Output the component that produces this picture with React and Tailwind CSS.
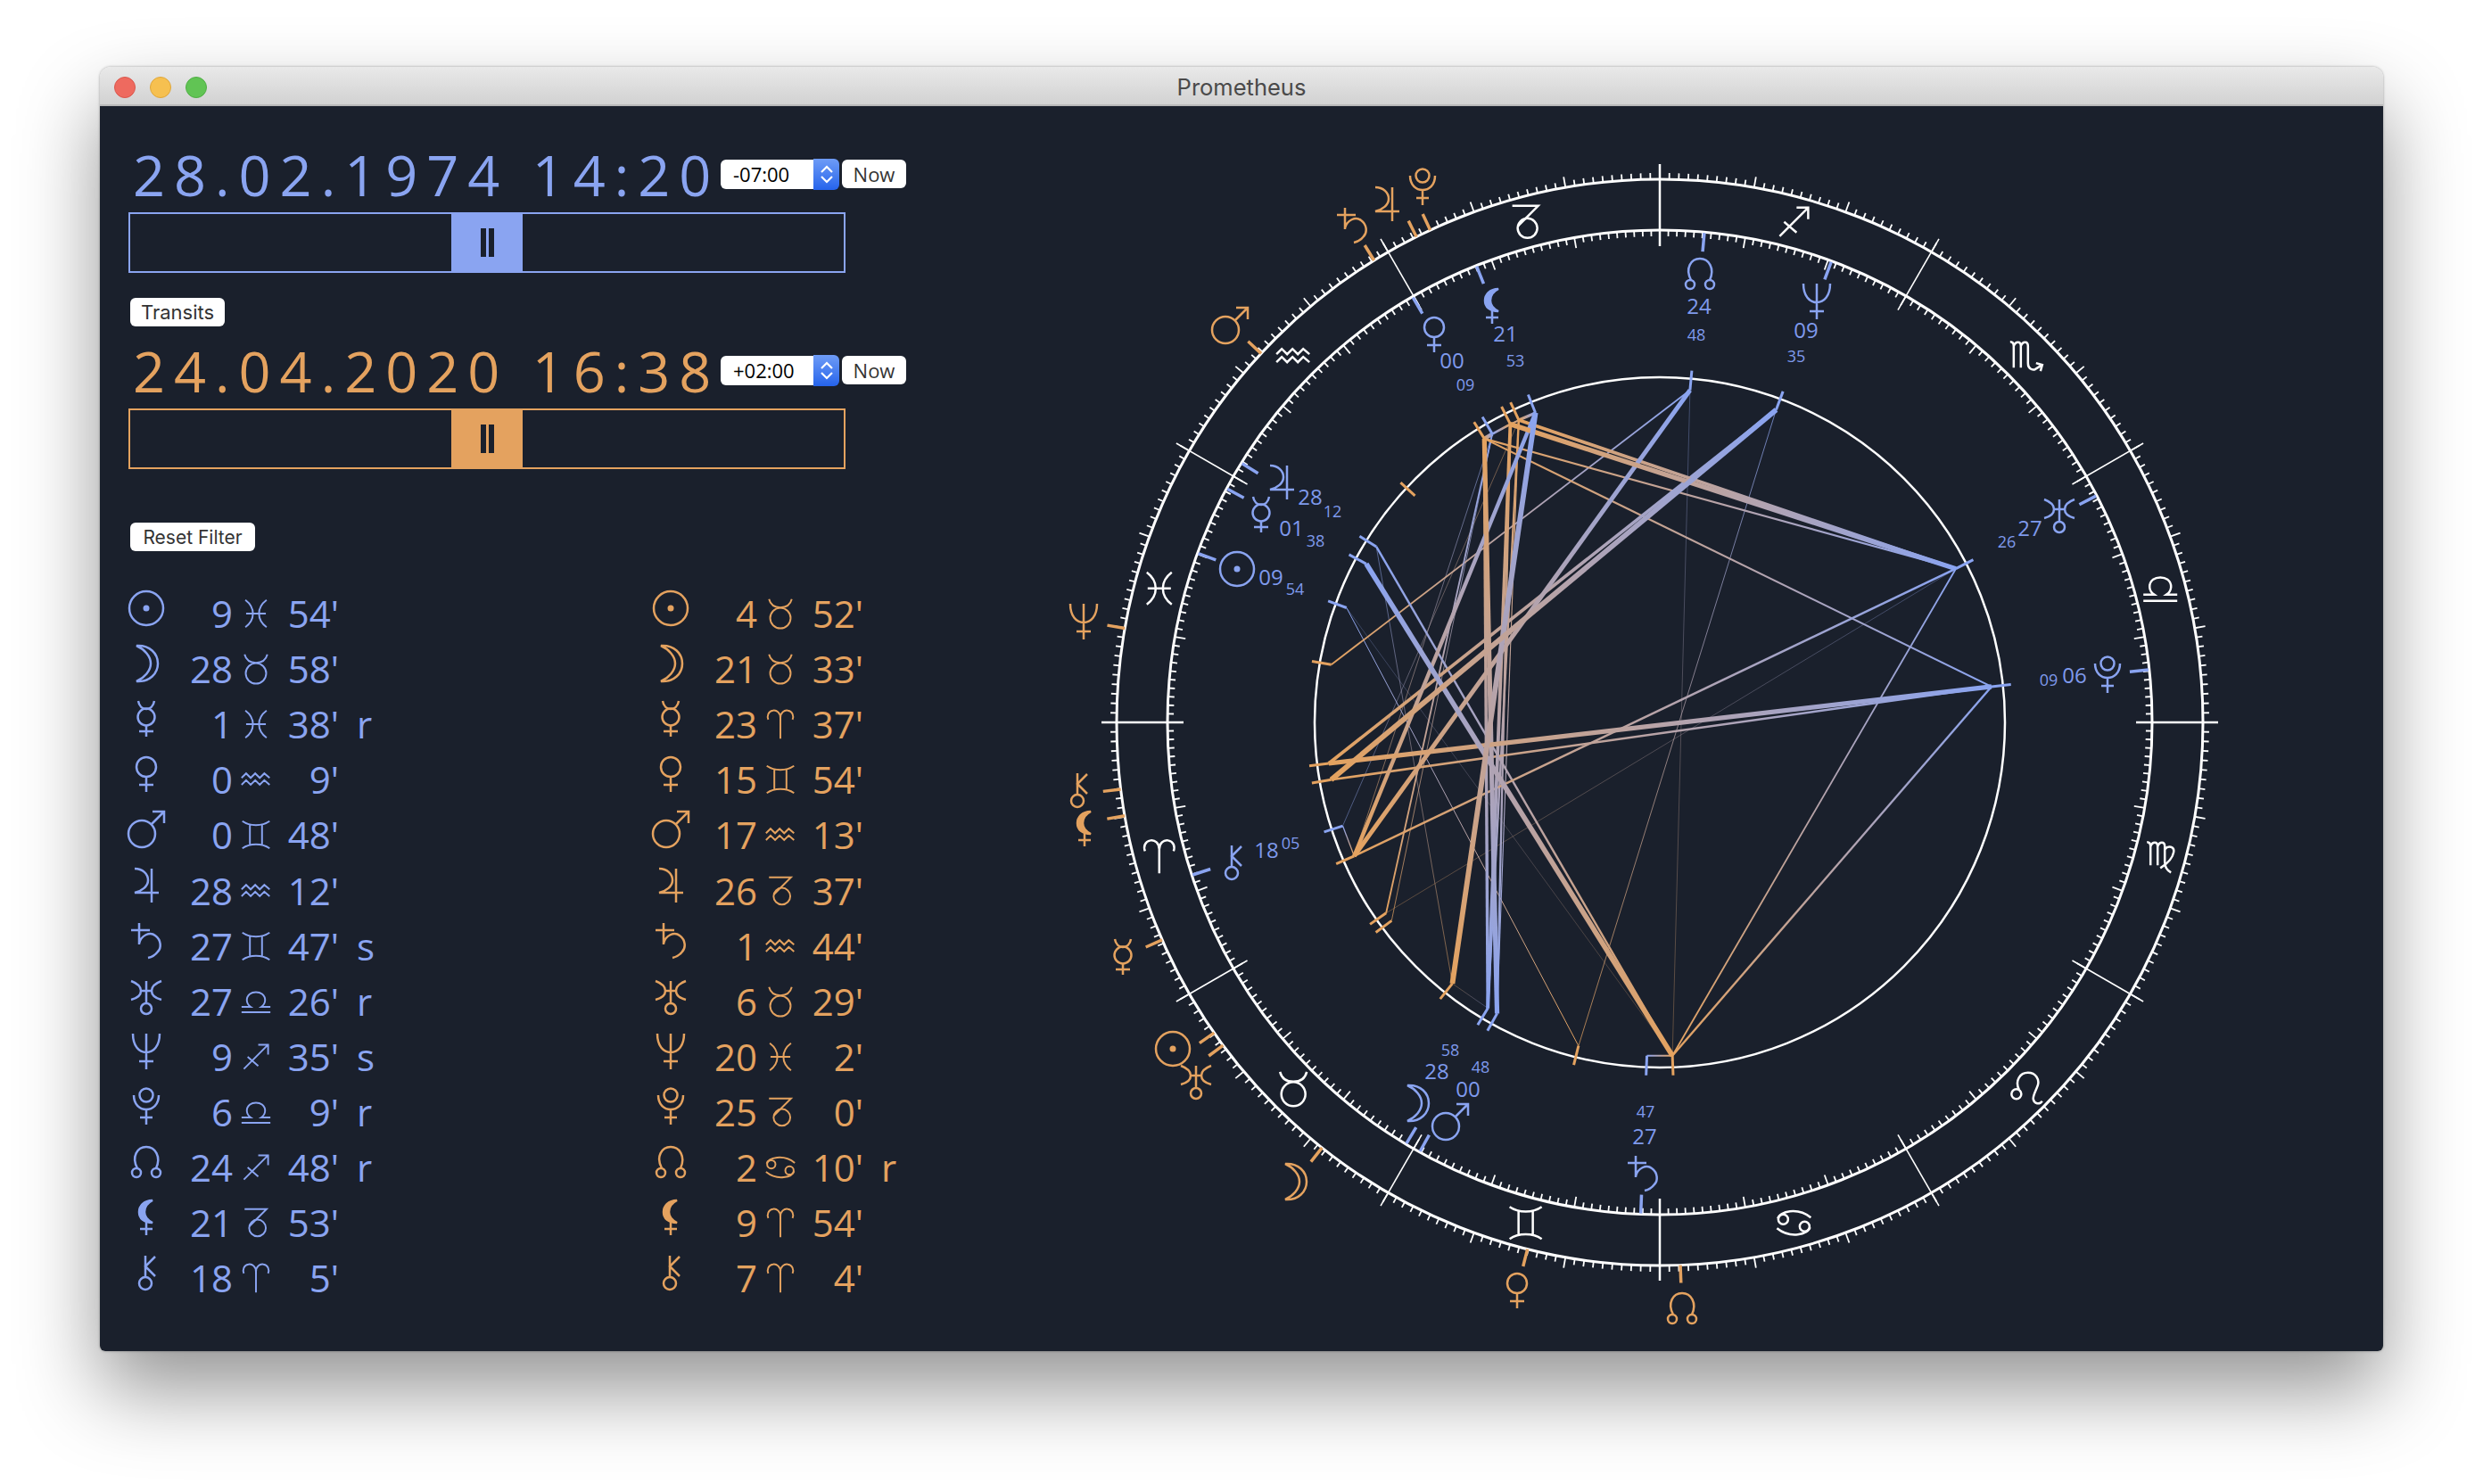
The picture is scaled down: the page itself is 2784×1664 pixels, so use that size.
import React from "react";

const BLUE = "#8aa4f1";
const ORANGE = "#e4a25f";
const CX = 700;
const CY = 691;

// symbols are drawn around 0,0 in a box of about 40x40
const GLYPHS = {
  sun: (
    <>
      <circle r="19" />
      <circle r="3.5" fill="currentColor" stroke="none" />
    </>
  ),
  moon: <path d="M-11 -20 C 4 -21 13 -11 13 0 C 13 11 4 21 -11 20 C -2 16 5 8 5 0 C 5 -8 -2 -16 -11 -20 Z" />,
  mercury: (
    <>
      <path d="M-9 -20 C -8 -14 -4 -11 0 -11 C 4 -11 8 -14 9 -20" />
      <circle cy="-2" r="9.5" />
      <path d="M0 8 V20 M-8 14 H8" />
    </>
  ),
  venus: (
    <>
      <circle cy="-8" r="11" />
      <path d="M0 3 V20 M-8 12 H8" />
    </>
  ),
  mars: (
    <>
      <circle cx="-5" cy="5" r="15" />
      <path d="M6 -6 L20 -20 M7 -20 H20 V-7" />
    </>
  ),
  jupiter: <path d="M-13 -19 C -4 -19 2 -13 2 -6 C 2 1 -5 6 -13 8 H14 M6 -19 V19" />,
  saturn: <path d="M-8 -20 V4 M-17 -12 H4 M-8 3 C -6 -6 4 -11 10 -6 C 17 -1 17 8 13 12 C 10 16 7 18 2 19" />,
  uranus: (
    <>
      <path d="M-17 -17 C -9 -14 -6 -10 -6 -6 C -6 -2 -9 2 -17 4 M17 -17 C 9 -14 6 -10 6 -6 C 6 -2 9 2 17 4 M-6 -6 H6 M0 -17 V8" />
      <circle cy="14" r="6" />
    </>
  ),
  neptune: <path d="M-15 -20 C -15 -6 -8 1 0 1 C 8 1 15 -6 15 -20 M0 -20 V20 M-8 11 H8" />,
  pluto: (
    <>
      <circle cy="-13" r="7.5" />
      <path d="M-14 -13 C -14 -2 -7 3 0 3 C 7 3 14 -2 14 -13 M0 3 V20 M-7 12 H7" />
    </>
  ),
  node: (
    <>
      <path d="M-10 7 C -17 -6 -10 -17 0 -17 C 10 -17 17 -6 11 7" />
      <circle cx="-11" cy="12" r="5" />
      <circle cx="11" cy="12" r="5" />
    </>
  ),
  lilith: (
    <>
      <path d="M7 -19 C -3 -19 -8 -12 -8 -6 C -8 1 -3 6 7 6 C 1 3 -2 -1 -2 -6 C -2 -12 1 -16 7 -19 Z" fill="currentColor" />
      <path d="M0 4 V20 M-7 13 H7" />
    </>
  ),
  chiron: (
    <>
      <circle cx="-1" cy="12" r="7" />
      <path d="M-1 5 V-19 M10 -18 L-1 -7 L10 4" />
    </>
  ),
  aries: <path d="M0 19 V-8 C 0 -15 -5 -19 -10 -18 C -16 -17 -18 -11 -16 -6 M0 -8 C 0 -15 5 -19 10 -18 C 16 -17 18 -11 16 -6" />,
  taurus: (
    <>
      <circle cy="6" r="13.5" />
      <path d="M-15 -19 C -13 -11 -7 -8 0 -8 C 7 -8 13 -11 15 -19" />
    </>
  ),
  gemini: <path d="M-18 -18 C -8 -11 8 -11 18 -18 M-18 18 C -8 11 8 11 18 18 M-8 -14 V14 M8 -14 V14" />,
  cancer: (
    <>
      <circle cx="-12" cy="-4" r="5.5" />
      <circle cx="12" cy="4" r="5.5" />
      <path d="M-18 -5 C -16 -13 4 -18 19 -6 M18 5 C 16 13 -4 18 -19 6" />
    </>
  ),
  leo: (
    <>
      <circle cx="-11" cy="6" r="5.5" />
      <path d="M-8 1 C -13 -9 -7 -18 2 -18 C 11 -18 15 -10 13 -4 C 11 2 7 8 8 12 C 9 17 15 18 18 14" />
    </>
  ),
  virgo: (
    <path d="M-15 -16 C -12 -16 -11 -14 -11 -11 V10 M-11 -11 C -9 -17 -3 -17 -3 -11 V10 M-3 -11 C -1 -17 5 -17 5 -11 V6 C 5 12 8 16 12 18 M5 -8 C 9 -13 16 -11 15 -5 C 14 1 8 8 0 13" />
  ),
  libra: <path d="M-19 14 H19 M-19 7 H-7 C -13 3 -14 -5 -8 -10 C -4 -13 4 -13 8 -10 C 14 -5 13 3 7 7 H19" />,
  scorpio: (
    <path d="M-18 -16 C -15 -16 -14 -14 -14 -11 V13 M-14 -11 C -12 -17 -6 -17 -6 -11 V13 M-6 -11 C -4 -17 2 -17 2 -11 V8 C 2 14 6 16 10 15 L18 10 M11 8 L18 10 L16 17" />
  ),
  sagittarius: <path d="M-16 16 L16 -16 M3 -16 H16 V-3 M-11 0 L3 12" />,
  capricorn: (
    <>
      <path d="M-15 -18 H14 L-9 5" />
      <circle cx="2" cy="7" r="11" />
    </>
  ),
  aquarius: <path d="M-19 -2 L-13 -8 L-7 -2 L-1 -8 L5 -2 L11 -8 L18 -2 M-19 7 L-13 1 L-7 7 L-1 1 L5 7 L11 1 L18 7" />,
  pisces: <path d="M-14 -18 C -6 -12 -4 -6 -4 0 C -4 6 -6 12 -14 18 M14 -18 C 6 -12 4 -6 4 0 C 4 6 6 12 14 18 M-13 0 H13" />,
};

const Glyph = ({ name, x = 0, y = 0, scale = 1, color, width = 2.5 }) => (
  <g
    transform={`translate(${x} ${y}) scale(${scale})`}
    fill="none"
    stroke="currentColor"
    strokeWidth={width}
    strokeLinecap="butt"
    strokeLinejoin="miter"
    style={{ color }}
  >
    {GLYPHS[name]}
  </g>
);

const SIGNS = ["aries", "taurus", "gemini", "cancer", "leo", "virgo", "libra", "scorpio", "sagittarius", "capricorn", "aquarius", "pisces"];

// name, sign index, degree, minute, flag
const NATAL = [
  ["sun", 11, 9, 54, ""],
  ["moon", 1, 28, 58, ""],
  ["mercury", 11, 1, 38, "r"],
  ["venus", 10, 0, 9, ""],
  ["mars", 2, 0, 48, ""],
  ["jupiter", 10, 28, 12, ""],
  ["saturn", 2, 27, 47, "s"],
  ["uranus", 6, 27, 26, "r"],
  ["neptune", 8, 9, 35, "s"],
  ["pluto", 6, 6, 9, "r"],
  ["node", 8, 24, 48, "r"],
  ["lilith", 9, 21, 53, ""],
  ["chiron", 0, 18, 5, ""],
];

const TRANSIT = [
  ["sun", 1, 4, 52, ""],
  ["moon", 1, 21, 33, ""],
  ["mercury", 0, 23, 37, ""],
  ["venus", 2, 15, 54, ""],
  ["mars", 10, 17, 13, ""],
  ["jupiter", 9, 26, 37, ""],
  ["saturn", 10, 1, 44, ""],
  ["uranus", 1, 6, 29, ""],
  ["neptune", 11, 20, 2, ""],
  ["pluto", 9, 25, 0, ""],
  ["node", 3, 2, 10, "r"],
  ["lilith", 0, 9, 54, ""],
  ["chiron", 0, 7, 4, ""],
];

// where the chart puts each symbol and its two numbers (page pixels)
const NATAL_LABELS = {
  sun: [1387, 638, 1425, 648, 1452, 660],
  moon: [1589, 1237, 1611, 1202, 1626, 1177],
  mercury: [1414, 577, 1448, 593, 1475, 606],
  venus: [1608, 375, 1628, 405, 1643, 431],
  mars: [1626, 1258, 1646, 1222, 1660, 1196],
  jupiter: [1437, 541, 1469, 558, 1494, 573],
  saturn: [1842, 1316, 1844, 1275, 1845, 1246],
  uranus: [2309, 577, 2276, 593, 2250, 607],
  neptune: [2037, 338, 2025, 371, 2014, 399],
  pluto: [2363, 757, 2326, 758, 2297, 762],
  node: [1906, 307, 1905, 344, 1902, 375],
  lilith: [1673, 343, 1688, 375, 1699, 404],
  chiron: [1382, 967, 1420, 954, 1447, 945],
};

const TRANSIT_LABELS = {
  sun: [1315, 1176],
  moon: [1452, 1325],
  mercury: [1259, 1073],
  venus: [1701, 1447],
  mars: [1379, 365],
  jupiter: [1555, 229],
  saturn: [1516, 253],
  uranus: [1341, 1212],
  neptune: [1215, 697],
  pluto: [1595, 210],
  node: [1886, 1467],
  lilith: [1216, 929],
  chiron: [1209, 886],
};

const SVG_X = 1161;
const SVG_Y = 119;

const lon = (p) => p[1] * 30 + p[2] + p[3] / 60;
const polar = (deg, r) => {
  const a = (deg * Math.PI) / 180;
  return [CX - r * Math.cos(a), CY + r * Math.sin(a)];
};

const RadialLine = ({ deg, from, to, color = "#fff", width = 1.5 }) => {
  const [x1, y1] = polar(deg, from);
  const [x2, y2] = polar(deg, to);
  return <line x1={x1} y1={y1} x2={x2} y2={y2} stroke={color} strokeWidth={width} />;
};

// sextiles are not drawn in this chart
const ASPECTS = [
  [0, 8],
  [90, 7],
  [120, 8],
  [180, 8],
];

const findAspects = () => {
  const found = [];
  NATAL.forEach((n) => {
    TRANSIT.forEach((t) => {
      const a = lon(n);
      const b = lon(t);
      let diff = Math.abs(a - b);
      if (diff > 180) diff = 360 - diff;
      ASPECTS.forEach(([angle, maxOrb]) => {
        const orb = Math.abs(diff - angle);
        if (orb > maxOrb) return;
        const w = 6.2 * Math.pow(Math.max(0, 1 - orb / 8.5), 1.5);
        found.push({ id: `${n[0]}-${t[0]}`, a, b, width: Math.max(w, 0.7), opacity: Math.min(1, 0.25 + w * 0.8) });
      });
    });
  });
  return found.sort((p, q) => p.width - q.width);
};

const Chart = () => {
  const lines = findAspects();
  const ticks = Array.from({ length: 360 }, (_, i) => i);
  return (
    <svg width="1400" height="1396" viewBox="0 0 1400 1396" className="block shrink-0 [font-family:'Open_Sans',sans-serif]">
      <defs>
        {lines.map((l) => {
          const [x1, y1] = polar(l.a, 374);
          const [x2, y2] = polar(l.b, 374);
          return (
            <linearGradient key={l.id} id={l.id} gradientUnits="userSpaceOnUse" x1={x1} y1={y1} x2={x2} y2={y2}>
              <stop offset="0" stopColor={BLUE} />
              <stop offset="1" stopColor={ORANGE} />
            </linearGradient>
          );
        })}
      </defs>

      <circle cx={CX} cy={CY} r="387" fill="none" stroke="#fff" strokeWidth="2.5" />
      <circle cx={CX} cy={CY} r="552" fill="none" stroke="#fff" strokeWidth="3" />
      <circle cx={CX} cy={CY} r="609" fill="none" stroke="#fff" strokeWidth="3" />

      {ticks.map((d) => (
        <g key={d}>
          <RadialLine deg={d} from={609} to={d % 10 === 0 ? 621 : 616} width={1.8} />
          <RadialLine deg={d} from={552} to={d % 10 === 0 ? 540 : 545} width={1.8} />
          {d % 30 === 0 && <RadialLine deg={d} from={534} to={626} width={d % 90 === 0 ? 2.5 : 1.6} />}
        </g>
      ))}

      {SIGNS.map((s, i) => {
        const [x, y] = polar(i * 30 + 15, 581);
        return <Glyph key={s} name={s} x={x} y={y} color="#fff" />;
      })}

      {lines.map((l) => {
        const [x1, y1] = polar(l.a, 374);
        const [x2, y2] = polar(l.b, 374);
        return <line key={l.id} x1={x1} y1={y1} x2={x2} y2={y2} stroke={`url(#${l.id})`} strokeWidth={l.width} opacity={l.opacity} />;
      })}

      {NATAL.map((p) => {
        const d = lon(p);
        const [gx, gy, ax, ay, bx, by] = NATAL_LABELS[p[0]];
        return (
          <g key={p[0]}>
            <RadialLine deg={d} from={374} to={396} color={BLUE} width={3} />
            <RadialLine deg={d} from={530} to={551} color={BLUE} width={3.5} />
            <Glyph name={p[0]} x={gx - SVG_X} y={gy - SVG_Y} color={BLUE} />
            <text x={ax - SVG_X} y={ay - SVG_Y + 8} textAnchor="middle" className="fill-[#7f9aec] text-[24px]">
              {String(p[2]).padStart(2, "0")}
            </text>
            <text x={bx - SVG_X} y={by - SVG_Y + 7} textAnchor="middle" className="fill-[#7f9aec] text-[18px]">
              {String(p[3]).padStart(2, "0")}
            </text>
          </g>
        );
      })}

      {TRANSIT.map((p) => {
        const d = lon(p);
        const [gx, gy] = TRANSIT_LABELS[p[0]];
        return (
          <g key={p[0]}>
            <RadialLine deg={d} from={374} to={396} color={ORANGE} width={3} />
            <RadialLine deg={d} from={609} to={629} color={ORANGE} width={3.5} />
            <Glyph name={p[0]} x={gx - SVG_X} y={gy - SVG_Y} color={ORANGE} />
          </g>
        );
      })}
    </svg>
  );
};

const ListIcon = ({ name, color, scale = 1, size = 40, width = 2.5, className = "" }) => (
  <svg width={size} height="44" viewBox={`${-size / 2} -22 ${size} 44`} className={`shrink-0 overflow-visible ${className}`}>
    <Glyph name={name} scale={scale} color={color} width={width} />
  </svg>
);

const PositionRow = ({ row, color }) => (
  <div className="flex items-center h-[62.1px]" style={{ color }}>
    <ListIcon name={row[0]} color={color} className="mb-[12px]" />
    <span className="w-[77px] text-right">{row[2]}</span>
    <ListIcon name={SIGNS[row[1]]} color={color} scale={0.85} size={36} width={2.3} className="ml-[8px]" />
    <span className="w-[75px] text-right">{row[3]}'</span>
    {row[4] && <span className="ml-[20px]">{row[4]}</span>}
  </div>
);

const TimeRow = ({ date, offset, textClass }) => (
  <div className="flex items-center h-16 w-[872px]">
    <span className={`w-[664px] pl-[5px] whitespace-pre text-[63px] font-normal tracking-[10px] leading-none ${textClass}`}>{date}</span>
    <div className="flex items-center w-[133px] h-[35px]">
      <span className="flex-1 h-[33px] pl-[14px] bg-white rounded-l-md text-[22px] leading-[33px] text-black">{offset}</span>
      <div className="w-[29px] h-[35px] rounded-r-md flex flex-col items-center justify-center gap-[3px] bg-gradient-to-b from-[#6e9bf6] to-[#2563eb]">
        <svg width="14" height="9" viewBox="0 0 14 9" fill="none" stroke="#fff" strokeWidth="2.2">
          <path d="M1 8 L7 2 L13 8" />
        </svg>
        <svg width="14" height="9" viewBox="0 0 14 9" fill="none" stroke="#fff" strokeWidth="2.2">
          <path d="M1 1 L7 7 L13 1" />
        </svg>
      </div>
    </div>
    <button className="ml-[3px] w-[72px] h-[32px] bg-white rounded-md text-[22px] text-[#333]">Now</button>
  </div>
);

const Slider = ({ borderClass, handleClass }) => (
  <div className={`mt-[11px] w-[804px] h-[68px] border-2 flex justify-center ${borderClass}`}>
    <div className={`w-[80px] -my-[2px] flex items-center justify-center gap-[3px] ${handleClass}`}>
      <div className="w-[6px] h-[32px] bg-[#1a202c]" />
      <div className="w-[6px] h-[32px] bg-[#1a202c]" />
    </div>
  </div>
);

const SmallButton = ({ children, className }) => (
  <button className={`block h-[32px] ml-[2px] bg-white rounded-md text-[#333] leading-none ${className}`}>{children}</button>
);

export default function App() {
  return (
    <div className="w-[2784px] h-[1664px] bg-white pt-[75px] pl-[112px] overflow-hidden [font-family:'Open_Sans',sans-serif]">
      <div className="w-[2560px] h-[1440px] rounded-t-[12px] rounded-b-[6px] overflow-hidden shadow-[0_44px_90px_rgba(0,0,0,0.42),0_0_3px_rgba(0,0,0,0.35)]">
        <div className="relative h-[44px] pt-1 flex items-center justify-center bg-gradient-to-b from-[#e9e9e9] to-[#d2d2d2] border-b-2 border-[#b9b9b9]">
          <div className="absolute left-4 flex gap-[16px]">
            <div className="w-6 h-6 rounded-full bg-[#ee6a5f] border border-[#d9564c]" />
            <div className="w-6 h-6 rounded-full bg-[#f6c050] border border-[#dfa63a]" />
            <div className="w-6 h-6 rounded-full bg-[#61c454] border border-[#4fae44]" />
          </div>
          <span className="[font-family:Inter,sans-serif] text-[25.5px] text-[#4a4a4a]">Prometheus</span>
        </div>

        <div className="flex h-[1396px] bg-[#1a202c]">
          <div className="w-[1049px] shrink-0 pl-8 pt-[44px]">
            <TimeRow date="28.02.1974 14:20" offset="-07:00" textClass="text-[#8aa4f1]" />
            <Slider borderClass="border-[#8aa4f1]" handleClass="bg-[#8aa4f1]" />
            <SmallButton className="mt-[28px] w-[106px] text-[22px] [font-family:Inter,sans-serif]">Transits</SmallButton>
            <div className="mt-[17px]">
              <TimeRow date="24.04.2020 16:38" offset="+02:00" textClass="text-[#e4a25f]" />
            </div>
            <Slider borderClass="border-[#e4a25f]" handleClass="bg-[#e4a25f]" />
            <SmallButton className="mt-[60px] w-[140px] text-[21px] [font-family:Inter,sans-serif]">Reset Filter</SmallButton>
            <div className="mt-[39px] grid grid-cols-[588px_300px] text-[42px] font-normal leading-none">
              <div>
                {NATAL.map((row) => (
                  <PositionRow key={row[0]} row={row} color={BLUE} />
                ))}
              </div>
              <div>
                {TRANSIT.map((row) => (
                  <PositionRow key={row[0]} row={row} color={ORANGE} />
                ))}
              </div>
            </div>
          </div>
          <Chart />
        </div>
      </div>
    </div>
  );
}
